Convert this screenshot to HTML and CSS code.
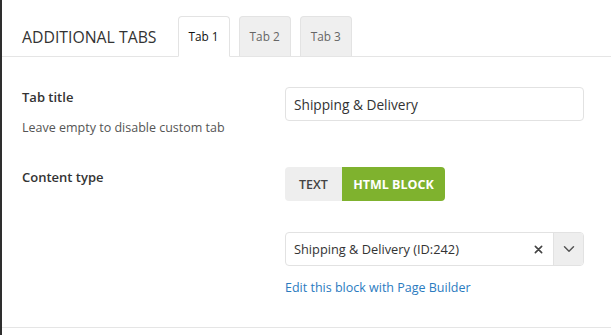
FILE: index.html
```html
<!DOCTYPE html>
<html>
<head>
<meta charset="utf-8">
<link rel="stylesheet" href="styles.css">
</head>
<body>
<div class="panel">
  <div class="header">
    <h2 class="title">ADDITIONAL TABS</h2>
    <div class="tabs">
      <div class="tab active">Tab 1</div>
      <div class="tab">Tab 2</div>
      <div class="tab">Tab 3</div>
    </div>
  </div>
  <div class="body">
    <div class="row row-title">
      <div class="label-col">
        <div class="label">Tab title</div>
        <div class="desc">Leave empty to disable custom tab</div>
      </div>
      <div class="field-col">
        <div class="input">Shipping &amp; Delivery</div>
      </div>
    </div>
    <div class="row row-content">
      <div class="label-col">
        <div class="label">Content type</div>
      </div>
      <div class="field-col">
        <div class="segmented">
          <div class="seg">TEXT</div>
          <div class="seg on">HTML BLOCK</div>
        </div>
        <div class="select">
          <div class="select-value">Shipping &amp; Delivery (ID:242)</div>
          <div class="select-clear">
            <svg width="9" height="9" viewBox="0 0 10 10"><path d="M1.5 1.5 L8.5 8.5 M8.5 1.5 L1.5 8.5" stroke="#444" stroke-width="1.8" stroke-linecap="round"/></svg>
          </div>
          <div class="select-arrow">
            <svg width="12" height="8" viewBox="0 0 12 8"><path d="M1.5 1.8 L6 6.2 L10.5 1.8" fill="none" stroke="#555" stroke-width="1.5" stroke-linecap="round" stroke-linejoin="round"/></svg>
          </div>
        </div>
        <a class="edit-link" href="#">Edit this block with Page Builder</a>
      </div>
    </div>
  </div>
</div>
</body>
</html>
```
FILE: styles.css
```css
* { box-sizing: border-box; }
html, body { margin: 0; padding: 0; background: #fff; }
body {
  font-family: "Open Sans", "Noto Sans", sans-serif;
  color: #333;
  width: 611px;
  height: 335px;
  overflow: hidden;
}
.panel {
  border-left: 2px solid #2e2e2e;
  height: 335px;
}
.header {
  display: flex;
  align-items: flex-end;
  height: 57px;
  border-bottom: 1px solid #e5e5e5;
  padding-left: 20px;
}
.title {
  margin: 0 21px 0 0;
  font-size: 15.8px;
  font-weight: 400;
  color: #333;
  line-height: 20px;
  padding-bottom: 9px;
}
.tabs {
  display: flex;
  gap: 9px;
  margin-bottom: -1px;
}
.tab {
  height: 40px;
  padding: 0 10px 2px;
  display: flex;
  align-items: center;
  font-size: 11.8px;
  color: #666;
  background: #efefef;
  border: 1px solid #e3e3e3;
  border-bottom: none;
  border-radius: 4px 4px 0 0;
}
.tab.active {
  background: #fff;
  color: #111;
  height: 41px;
  padding-bottom: 1px;
  border-bottom: 1px solid #fff;
}
.body {
  padding-left: 20px;
  border-bottom: 1px solid #e5e5e5;
}
.row {
  display: flex;
}
.row-title { padding-top: 30px; }
.row-content { padding-top: 29px; padding-bottom: 29px; }
.label-col {
  width: 263px;
  flex: none;
}
.field-col {
  width: 299px;
  display: flex;
  flex-direction: column;
  align-items: flex-start;
}
.label {
  font-size: 13px;
  font-weight: 600;
  line-height: 20px;
  color: #333;
}
.desc {
  margin-top: 11px;
  font-size: 12.5px;
  line-height: 20px;
  color: #555;
}
.input {
  width: 299px;
  height: 34px;
  border: 1px solid #e2e2e2;
  border-radius: 4px;
  padding: 0 8px;
  display: flex;
  align-items: center;
  font-size: 13.7px;
  color: #333;
}
.segmented {
  display: flex;
  height: 34px;
  border-radius: 4px;
  overflow: hidden;
}
.seg {
  display: flex;
  align-items: center;
  justify-content: center;
  font-size: 12.5px;
  font-weight: 600;
  background: #eee;
  color: #444;
  width: 57px;
}
.seg.on {
  background: #7fb22e;
  color: #fff;
  width: 103px;
  font-weight: 700;
}
.select {
  margin-top: 31px;
  width: 299px;
  height: 34px;
  border: 1px solid #e2e2e2;
  border-radius: 4px;
  display: flex;
  overflow: hidden;
}
.select-value {
  flex: 1;
  display: flex;
  align-items: center;
  padding-left: 8px;
  font-size: 12.8px;
  color: #333;
}
.select-clear {
  width: 30px;
  display: flex;
  align-items: center;
  justify-content: center;
}
.select-arrow {
  width: 30px;
  background: #eee;
  border-left: 1px solid #e2e2e2;
  display: flex;
  align-items: center;
  justify-content: center;
}
.edit-link {
  margin-top: 12px;
  font-size: 12.5px;
  line-height: 20px;
  color: #2b7bbf;
  text-decoration: none;
}
```
